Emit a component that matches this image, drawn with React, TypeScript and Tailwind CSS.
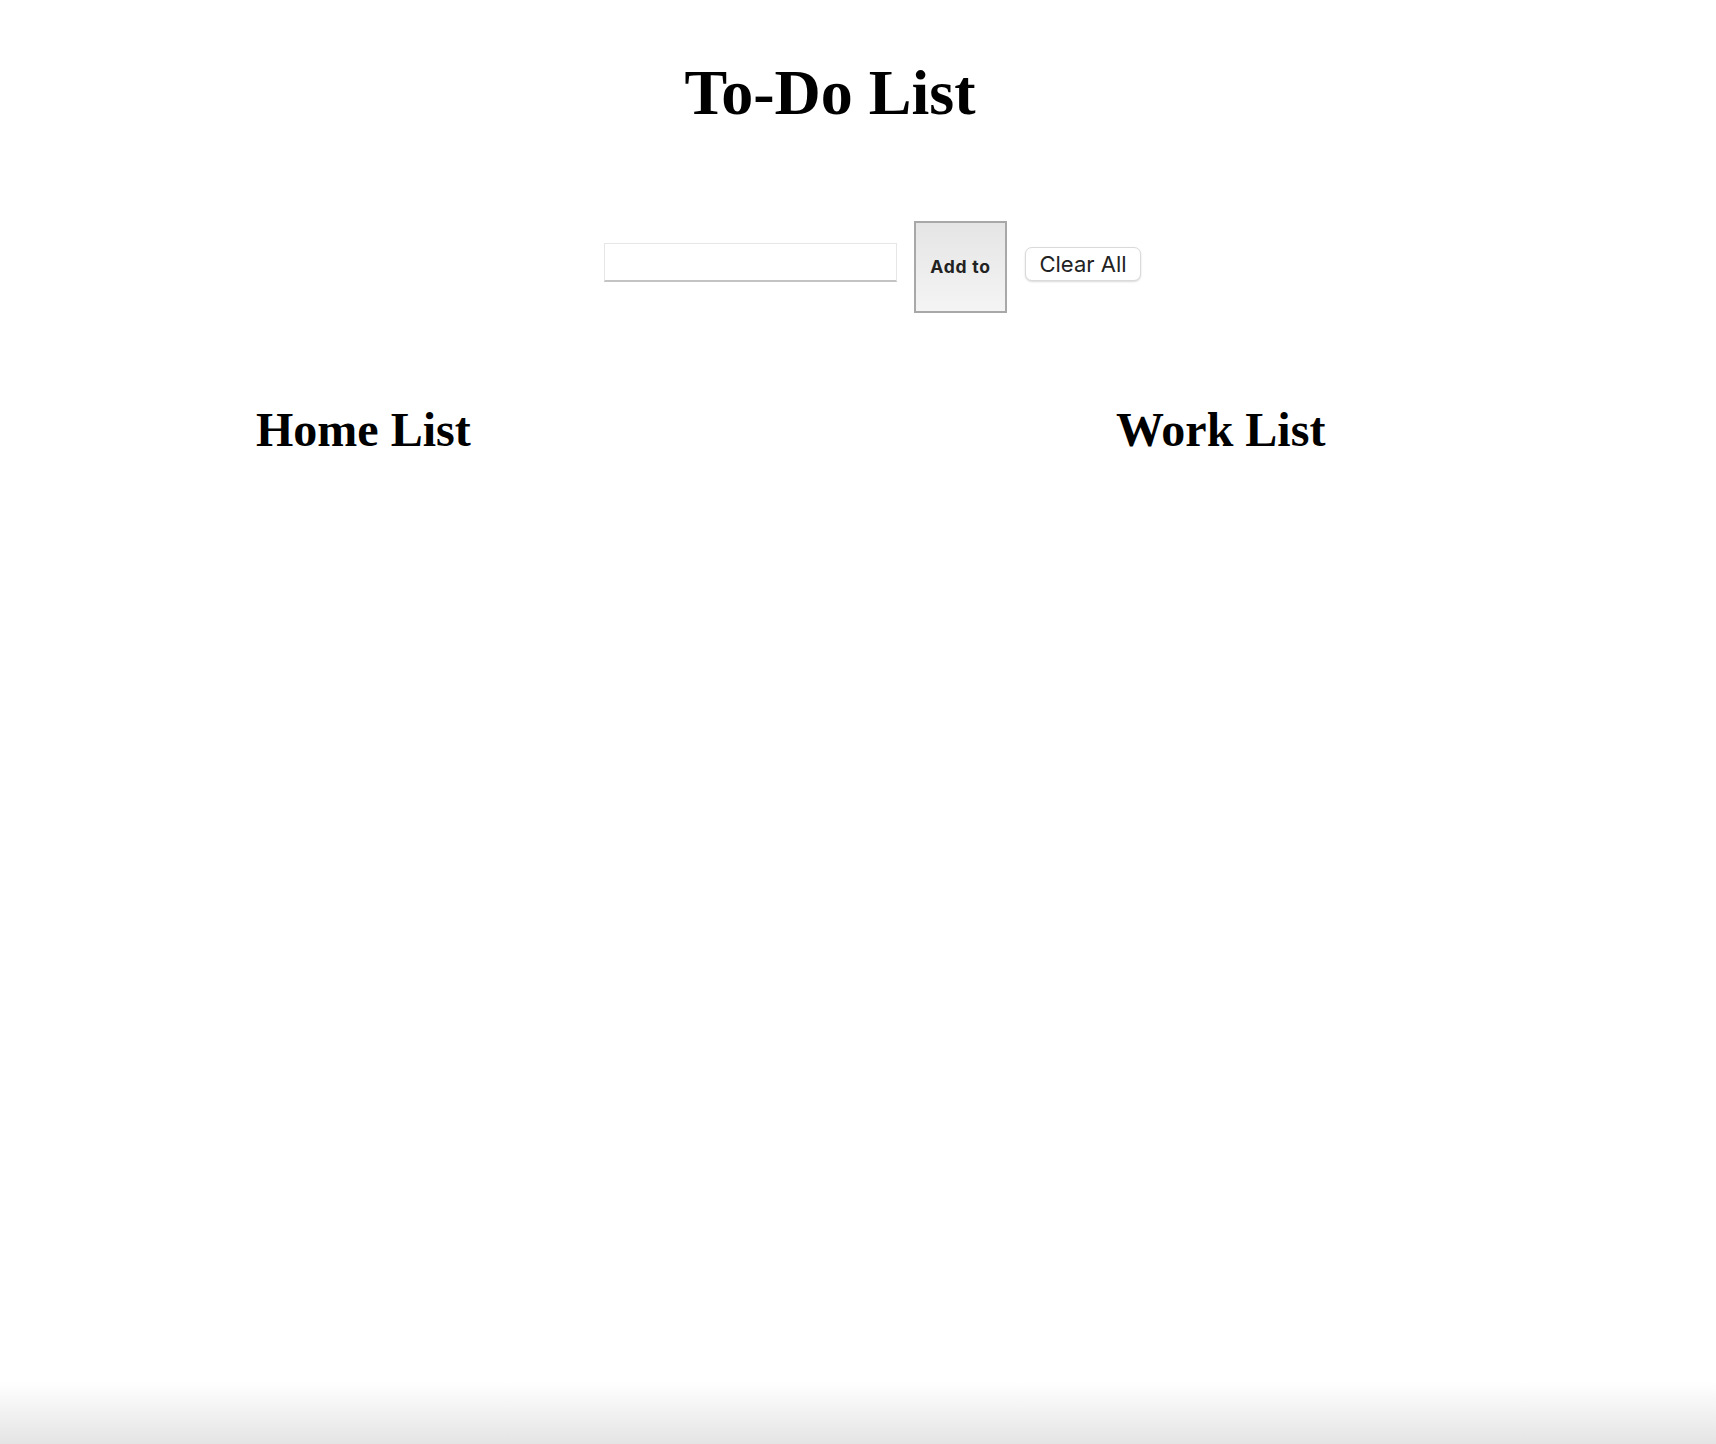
export default function App() {
  return (
    <div className="min-h-screen flex flex-col bg-white text-black font-['Liberation_Serif',serif]">
      <h1 className="mt-[61px] w-[1660px] text-center text-[64px] leading-[64px] font-bold">To-Do List</h1>

      {/* input row */}
      <div className="mt-[96px] flex items-start pl-[604px]">
        <input
          type="text"
          className="mt-[22px] h-[39px] w-[293px] border border-[#e6e6e6] border-b-2 border-b-[#c4c4c4] bg-white outline-none"
        />
        <button className="ml-[17px] h-[92px] w-[93px] border-2 border-[#a8a8a8] bg-gradient-to-b from-[#e5e5e5] to-[#f4f4f4] font-['Inter',sans-serif] text-[17.5px] tracking-[0.8px] font-bold text-[#222]">
          Add to
        </button>
        <button className="ml-[18px] mt-[26px] h-[34px] w-[116px] rounded-[7px] border border-[#dadada] bg-white shadow-[0_1px_2px_rgba(0,0,0,0.15)] font-['Inter',sans-serif] text-[22px] leading-none text-[#222]">
          Clear All
        </button>
      </div>

      {/* lists */}
      <div className="mt-[93px] grid grid-cols-2">
        <div className="pl-[256px]">
          <h2 className="text-[48px] leading-[48px] font-bold">Home List</h2>
          <ul></ul>
        </div>
        <div className="pl-[258px]">
          <h2 className="text-[48px] leading-[48px] font-bold">Work List</h2>
          <ul></ul>
        </div>
      </div>

      <div className="mt-auto h-[62px] bg-gradient-to-b from-white to-[#e4e4e4]"></div>
    </div>
  )
}
